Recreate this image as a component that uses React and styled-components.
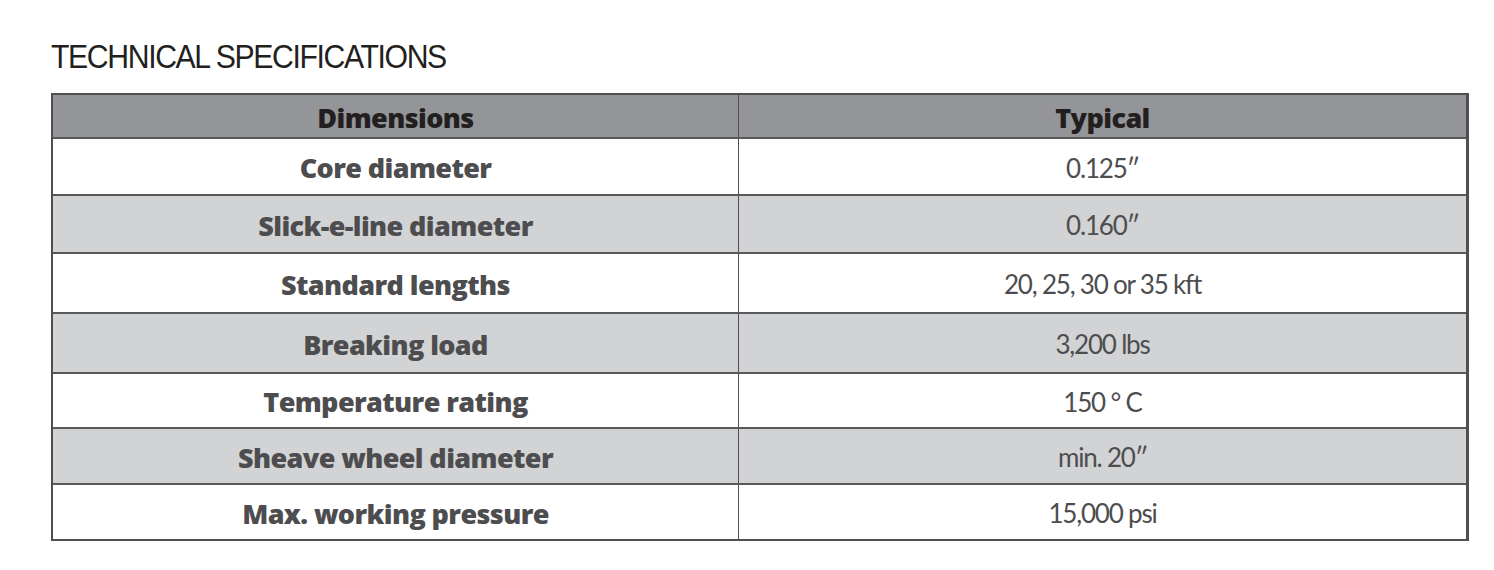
import styled, { createGlobalStyle } from 'styled-components';

const GlobalStyle = createGlobalStyle`
  body {
    margin: 0;
    background: #ffffff;
    font-family: "Lato", "Liberation Sans", sans-serif;
  }
`;

const Page = styled.div`
  padding: 38px 26px 0 51px;
`;

const Title = styled.h2`
  margin: 0 0 17px 0;
  font-family: "Liberation Sans", sans-serif;
  font-weight: 400;
  font-size: 33px;
  line-height: 38px;
  letter-spacing: -1.5px;
  color: #231f20;
  transform: scaleX(0.915);
  transform-origin: left center;
  white-space: nowrap;
`;

const Table = styled.div`
  width: 1418px;
  border-top: 2px solid #4f4f51;
  border-left: 2px solid #4f4f51;
  border-right: 3px solid #4f4f51;
  border-bottom: 2px solid #4f4f51;
  box-sizing: border-box;
`;

const Row = styled.div`
  display: grid;
  grid-template-columns: 685px 1fr;
  height: ${props => props.h}px;
  background: ${props => props.head ? '#939598' : props.shade ? '#d1d3d4' : '#ffffff'};
  border-bottom: ${props => props.last ? 'none' : '2px solid #58595b'};
  box-sizing: border-box;
`;

const Cell = styled.div`
  display: flex;
  align-items: center;
  justify-content: center;
  border-left: ${props => props.right ? '1px solid #4f4f51' : 'none'};
  font-family: ${props => props.bold ? '"Open Sans", "Lato", sans-serif' : '"Lato", sans-serif'};
  font-size: ${props => props.bold ? '27px' : '26px'};
  font-weight: ${props => props.bold ? 800 : 400};
  letter-spacing: ${props => props.bold ? '-0.6px' : '-1.2px'};
  color: ${props => props.head ? '#231f20' : '#4d4d4f'};
  padding-top: 2px;
`;

const rows = [
  ['Core diameter', '0.125\u2033', 57],
  ['Slick-e-line diameter', '0.160\u2033', 58],
  ['Standard lengths', '20, 25, 30 or 35 kft', 60],
  ['Breaking load', '3,200 lbs', 60],
  ['Temperature rating', '150 \u00b0 C', 55],
  ['Sheave wheel diameter', 'min. 20\u2033', 56],
  ['Max. working pressure', '15,000 psi', 54],
];

const App = () => {
  return (
    <>
      <GlobalStyle />
      <Page>
        <Title>TECHNICAL SPECIFICATIONS</Title>
        <Table>
          <Row head h={44}>
            <Cell bold head>Dimensions</Cell>
            <Cell bold head right>Typical</Cell>
          </Row>
          {rows.map(([name, value, h], i) => (
            <Row key={name} h={h} shade={i % 2 === 1} last={i === rows.length - 1}>
              <Cell bold>{name}</Cell>
              <Cell right>{value}</Cell>
            </Row>
          ))}
        </Table>
      </Page>
    </>
  );
};

export default App;
